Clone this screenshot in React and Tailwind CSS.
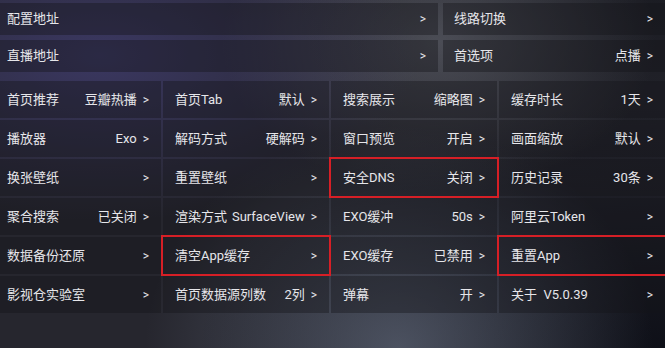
import React from 'react';

const topRows = [
    [
        { label: '配置地址', value: '' },
        { label: '线路切换', value: '' },
    ],
    [
        { label: '直播地址', value: '' },
        { label: '首选项', value: '点播' },
    ],
];

const rows = [
    [
        { label: '首页推荐', value: '豆瓣热播' },
        { label: '首页Tab', value: '默认' },
        { label: '搜索展示', value: '缩略图' },
        { label: '缓存时长', value: '1天' },
    ],
    [
        { label: '播放器', value: 'Exo' },
        { label: '解码方式', value: '硬解码' },
        { label: '窗口预览', value: '开启' },
        { label: '画面缩放', value: '默认' },
    ],
    [
        { label: '换张壁纸', value: '' },
        { label: '重置壁纸', value: '' },
        { label: '安全DNS', value: '关闭', marked: true },
        { label: '历史记录', value: '30条' },
    ],
    [
        { label: '聚合搜索', value: '已关闭' },
        { label: '渲染方式', value: 'SurfaceView' },
        { label: 'EXO缓冲', value: '50s' },
        { label: '阿里云Token', value: '' },
    ],
    [
        { label: '数据备份还原', value: '' },
        { label: '清空App缓存', value: '', marked: true },
        { label: 'EXO缓存', value: '已禁用' },
        { label: '重置App', value: '', marked: true },
    ],
    [
        { label: '影视仓实验室', value: '' },
        { label: '首页数据源列数', value: '2列' },
        { label: '弹幕', value: '开' },
        { label: '关于  V5.0.39', value: '' },
    ],
];

const Cell = ({ item, className = '' }) => (
    <div className={`relative flex items-center justify-between pl-3 pr-3 bg-[#14141a]/40 ${className}`}>
        <span className="whitespace-pre">{item.label}</span>
        <span className="flex items-center gap-[6px] whitespace-nowrap">
            {item.value && <span>{item.value}</span>}
            <span className="text-[12px]">&gt;</span>
        </span>
        {item.marked && (
            <div className="absolute -inset-x-[2px] -top-[2px] -bottom-[2px] border-2 border-[#d61f26] pointer-events-none" />
        )}
    </div>
);

const App = () => {
    return (
        <div
            className="w-[665px] h-[348px] overflow-hidden text-[13px] text-[#e6e6ea] bg-[#26262e] bg-[radial-gradient(ellipse_at_15%_16%,rgba(90,82,175,0.4),transparent_40%),radial-gradient(ellipse_at_60%_100%,rgba(115,125,145,0.55),transparent_45%),radial-gradient(ellipse_at_66%_12%,rgba(125,128,138,0.45),transparent_35%),radial-gradient(ellipse_at_100%_100%,rgba(10,12,20,0.85),transparent_50%),radial-gradient(ellipse_at_100%_0%,rgba(20,22,28,0.6),transparent_40%)]"
            style={{ fontFamily: 'Roboto, "Noto Sans CJK SC", "Noto Sans", sans-serif' }}
        >
            <div className="ml-[-5px] w-[670px] pt-[3px]">
                <div className="flex flex-col gap-[5px]">
                    {topRows.map((row, i) => (
                        <div key={i} className="grid grid-cols-[443px_222px] gap-[5px] h-[32px]">
                            {row.map((item, j) => (
                                <Cell key={j} item={item} className={j === 1 ? 'pl-[11px]' : ''} />
                            ))}
                        </div>
                    ))}
                </div>
                <div className="mt-[9px] flex flex-col gap-[2px]">
                    {rows.map((row, i) => (
                        <div key={i} className="grid grid-cols-4 gap-[2px] h-[37px]">
                            {row.map((item, j) => (
                                <Cell key={j} item={item} />
                            ))}
                        </div>
                    ))}
                </div>
            </div>
        </div>
    );
};

export default App;
